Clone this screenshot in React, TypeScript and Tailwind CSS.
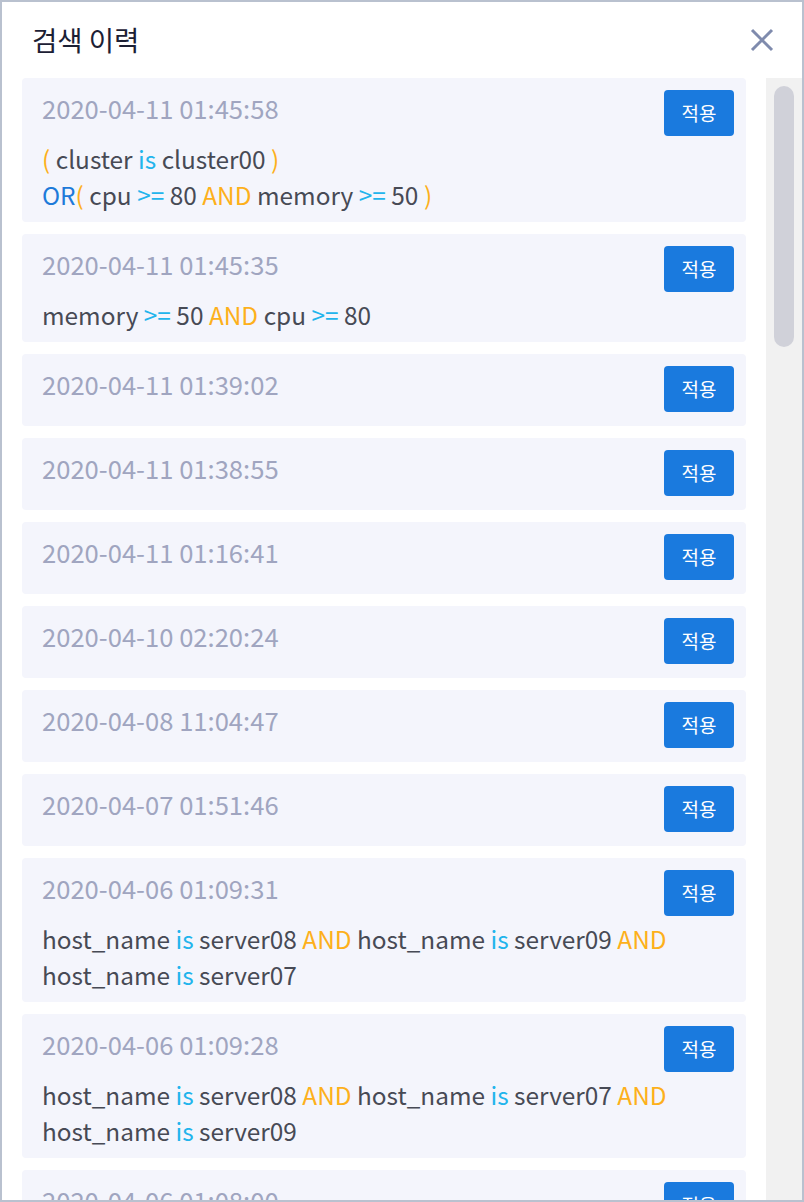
import React from "react";

type Entry = [string, string];

const history: Entry[] = [
  ["2020-04-11 01:45:58", "( cluster is cluster00 )\nOR( cpu >= 80 AND memory >= 50 )"],
  ["2020-04-11 01:45:35", "memory >= 50 AND cpu >= 80"],
  ["2020-04-11 01:39:02", ""],
  ["2020-04-11 01:38:55", ""],
  ["2020-04-11 01:16:41", ""],
  ["2020-04-10 02:20:24", ""],
  ["2020-04-08 11:04:47", ""],
  ["2020-04-07 01:51:46", ""],
  ["2020-04-06 01:09:31", "host_name is server08 AND host_name is server09 AND host_name is server07"],
  ["2020-04-06 01:09:28", "host_name is server08 AND host_name is server07 AND host_name is server09"],
  ["2020-04-06 01:08:00", "host_name is server08 AND host_name is server07 AND host_name is server06"],
  ["2020-04-06 01:07:42", "host_name is server08 AND host_name is server07"],
  ["2020-04-06 01:07:15", ""],
  ["2020-04-05 23:41:09", "( cluster is cluster01 )\nOR( cpu >= 90 AND disk >= 70 )"],
  ["2020-04-05 23:40:51", ""],
  ["2020-04-05 18:12:33", "cpu >= 90"],
  ["2020-04-05 18:10:04", ""],
  ["2020-04-04 15:27:48", "host_name is server03 AND host_name is server04 AND host_name is server05"],
  ["2020-04-04 15:26:19", "memory >= 70 AND disk >= 60"],
  ["2020-04-04 09:58:02", ""],
  ["2020-04-03 20:44:37", "( cluster is cluster02 )\nOR( memory >= 80 AND cpu >= 60 )"],
  ["2020-04-03 20:43:55", ""],
  ["2020-04-03 11:05:26", "cluster is cluster00 AND cpu >= 70"],
  ["2020-04-02 17:39:14", "host_name is server01 AND host_name is server02 AND host_name is server03"],
  ["2020-04-02 17:38:50", ""],
  ["2020-04-02 10:21:08", "disk >= 80"],
  ["2020-04-01 22:16:45", ""],
  ["2020-04-01 22:15:31", "( cluster is cluster00 )\nOR( disk >= 90 AND memory >= 60 )"],
  ["2020-04-01 14:03:57", ""],
  ["2020-03-31 19:48:22", "memory >= 90 OR cpu >= 95"],
  ["2020-03-31 19:47:10", "host_name is server10 AND host_name is server11 AND host_name is server12"],
  ["2020-03-31 08:30:44", ""],
  ["2020-03-30 16:55:18", "cluster is cluster03"],
  ["2020-03-30 16:54:02", ""],
  ["2020-03-30 12:12:29", "( cluster is cluster03 )\nOR( cpu >= 80 AND memory >= 80 )"],
  ["2020-03-29 21:37:06", ""],
  ["2020-03-29 10:09:53", "network >= 100 AND cpu >= 50"],
  ["2020-03-28 18:26:41", "host_name is server05 AND host_name is server06 AND host_name is server07"],
  ["2020-03-28 18:25:30", ""],
  ["2020-03-27 13:44:12", "( cluster is cluster01 )\nOR( memory >= 50 AND disk >= 50 )"],
  ["2020-03-27 09:02:38", "host_name is server02 AND host_name is server04 AND host_name is server06"],
];

const tokenColor = (tok: string) => {
  if (tok === "is" || tok === ">=" || tok === "<=") return "text-[#22b4ec]";
  if (tok === "AND" || tok === "(" || tok === ")") return "text-[#fdb01b]";
  if (tok === "OR") return "text-[#1d7ad9]";
  return "";
};

const QueryLine = ({ line }: { line: string }) => {
  const parts = line.split(/(\(|\)|\s+)/).filter((p) => p !== "");
  return (
    <div>
      {parts.map((p, i) => (
        <span key={i} className={tokenColor(p)}>
          {p}
        </span>
      ))}
    </div>
  );
};

const HistoryCard = ({ time, query }: { time: string; query: string }) => {
  return (
    <div
      className={
        "bg-[#f4f5fc] rounded pt-3 pl-5 pr-3 " + (query ? "pb-[9px]" : "pb-[14px]")
      }
    >
      <div className="flex items-start justify-between h-[46px]">
        <span className="text-[25.6px] leading-[35px] text-[#a0a5c0]">{time}</span>
        <button className="w-[70px] h-[46px] rounded bg-[#1a7ade] text-white text-[19px] shrink-0">
          적용
        </button>
      </div>
      {query && (
        <div className="mt-[5px] text-[24.4px] leading-[36px] text-[#474a55]">
          {query.split("\n").map((l, i) => (
            <QueryLine key={i} line={l} />
          ))}
        </div>
      )}
    </div>
  );
};

export default function App() {
  return (
    <div
      className="w-[804px] h-[1202px] border-2 border-[#b9c1cf] bg-white flex flex-col overflow-hidden"
      style={{ fontFamily: '"Noto Sans CJK KR", "Noto Sans", sans-serif' }}
    >
      <div className="h-[76px] shrink-0 flex items-center justify-between pl-[30px] pr-[28px]">
        <h2 className="text-[27.5px] text-[#1c2034]">검색 이력</h2>
        <button className="w-[24px] h-[24px]">
          <svg width="24" height="24" viewBox="0 0 24 24">
            <path d="M2 2L22 22M22 2L2 22" stroke="#7f8bad" strokeWidth="3" />
          </svg>
        </button>
      </div>
      <div className="flex-1 min-h-0 flex">
        <div className="flex-1 overflow-y-auto pl-5 pr-5 [scrollbar-width:none]">
          <div className="flex flex-col gap-3">
            {history.map(([t, q]) => (
              <HistoryCard key={t} time={t} query={q} />
            ))}
          </div>
        </div>
        <div className="w-[36px] shrink-0 bg-[#f1f1f1] px-2 py-2">
          <div className="h-[261px] rounded-full bg-[#d0d1d9]" />
        </div>
      </div>
    </div>
  );
}
